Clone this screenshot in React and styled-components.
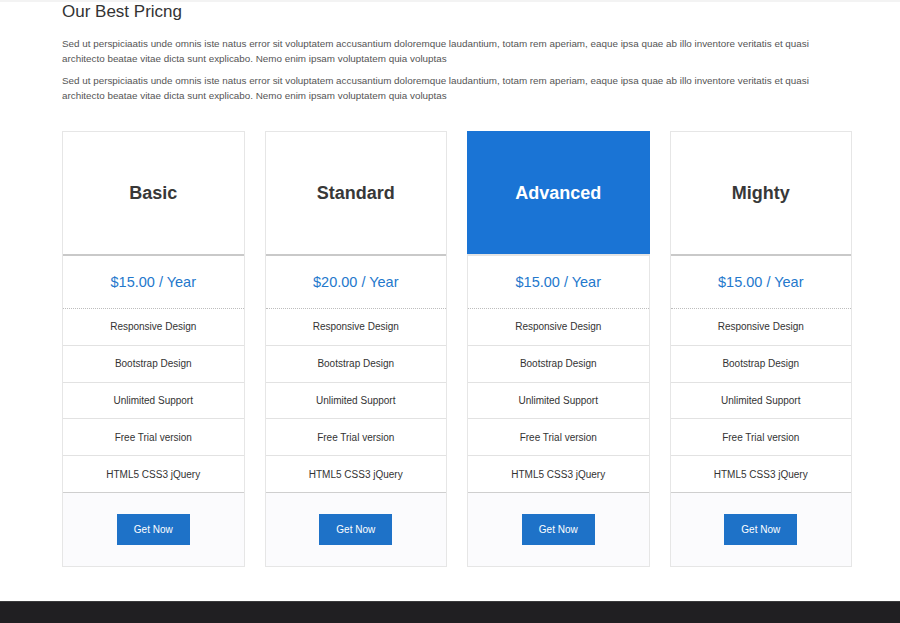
import React from "react";
import styled, { createGlobalStyle, css } from "styled-components";

const GlobalStyle = createGlobalStyle`
  body {
    margin: 0;
    background: #fff;
    font-family: "Liberation Sans", Arial, sans-serif;
    color: #333;
  }
`;

const Page = styled.div`
  min-height: 623px;
  display: flex;
  flex-direction: column;
`;

const TopStrip = styled.div`
  height: 2px;
  background: #f3f3f3;
`;

const Section = styled.section`
  width: 790px;
  margin-left: 62px;
  padding-bottom: 34px;
`;

const Title = styled.h2`
  margin: 0;
  font-size: 17px;
  font-weight: 400;
  line-height: 20px;
  color: #333;
`;

const Intro = styled.p`
  margin: ${(p) => (p.$first ? "13.5px" : "7.5px")} 0 0;
  font-size: 9.85px;
  line-height: 15px;
  color: #555;
`;

const Grid = styled.div`
  display: grid;
  grid-template-columns: repeat(4, 1fr);
  gap: 20px;
  margin-top: 28px;
`;

const Card = styled.div`
  border: 1px solid #e6e6e6;
  display: flex;
  flex-direction: column;
  background: #fff;
`;

const CardHead = styled.div`
  height: 121px;
  padding-top: 1px;
  display: flex;
  align-items: center;
  justify-content: center;
  border-bottom: 2px solid #c9c9c9;
  font-size: 18px;
  font-weight: 700;
  color: #383838;
  ${(p) =>
    p.$featured &&
    css`
      background: #1a74d5;
      color: #fff;
      margin: -1px -1px 0;
      padding-top: 2px;
      border-bottom-color: #e4e4e4;
    `}
`;

const Price = styled.div`
  height: 52px;
  display: flex;
  align-items: center;
  justify-content: center;
  font-size: 14.5px;
  color: #2478cc;
  border-bottom: 1px dotted #bdbdbd;
`;

const Feature = styled.div`
  height: 35.8px;
  display: flex;
  align-items: center;
  justify-content: center;
  font-size: 10px;
  color: #333;
  border-bottom: 1px solid ${(p) => (p.$last ? "#cfcfcf" : "#e2e2e2")};
`;

const CardFoot = styled.div`
  height: 73px;
  display: flex;
  align-items: center;
  justify-content: center;
  background: #fbfbfd;
`;

const Button = styled.button`
  width: 73px;
  height: 31px;
  border: 0;
  background: #1e72c8;
  color: #fff;
  font-family: inherit;
  font-size: 10px;
  cursor: pointer;
`;

const Footer = styled.footer`
  flex: 1;
  min-height: 22px;
  background: #201f22;
  border-top: 1px solid #3a3a3c;
`;

const features = [
  "Responsive Design",
  "Bootstrap Design",
  "Unlimited Support",
  "Free Trial version",
  "HTML5 CSS3 jQuery",
];

const plans = [
  { name: "Basic", price: "$15.00" },
  { name: "Standard", price: "$20.00" },
  { name: "Advanced", price: "$15.00", featured: true },
  { name: "Mighty", price: "$15.00" },
];

const text =
  "Sed ut perspiciaatis unde omnis iste natus error sit voluptatem accusantium doloremque laudantium, totam rem aperiam, eaque ipsa quae ab illo inventore veritatis et quasi architecto beatae vitae dicta sunt explicabo. Nemo enim ipsam voluptatem quia voluptas";

export default function App() {
  return (
    <Page>
      <GlobalStyle />
      <TopStrip />
      <Section>
        <Title>Our Best Pricng</Title>
        <Intro $first>{text}</Intro>
        <Intro>{text}</Intro>
        <Grid>
          {plans.map((plan) => (
            <Card key={plan.name}>
              <CardHead $featured={plan.featured}>{plan.name}</CardHead>
              <Price>{plan.price} / Year</Price>
              {features.map((f, i) => (
                <Feature key={f} $last={i === features.length - 1}>
                  {f}
                </Feature>
              ))}
              <CardFoot>
                <Button>Get Now</Button>
              </CardFoot>
            </Card>
          ))}
        </Grid>
      </Section>
      <Footer />
    </Page>
  );
}
